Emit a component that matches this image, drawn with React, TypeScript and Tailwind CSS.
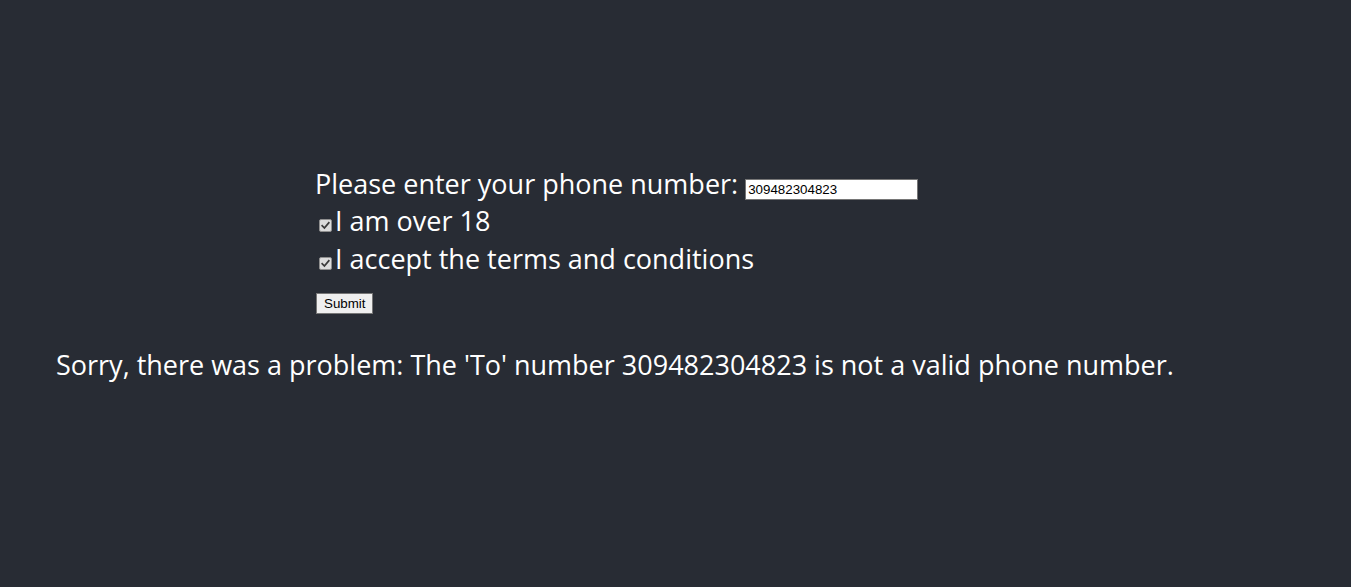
import React from "react";

function Check() {
  return (
    <span className="ml-[4px] mr-[3px] mt-[8px] inline-flex h-[13px] w-[13px] shrink-0 items-center justify-center rounded-[2px] border border-[#8f8f8f] bg-[#dcdcdc]">
      <svg width="9" height="9" viewBox="0 0 9 9" fill="none">
        <path d="M1.2 4.8 L3.4 7 L7.8 1.8" stroke="#3a3a3a" strokeWidth="1.8" strokeLinecap="square" />
      </svg>
    </span>
  );
}

export default function App() {
  return (
    <div
      className="min-h-[587px] w-full bg-[#282c34] text-white"
      style={{ fontFamily: '"Open Sans", "Noto Sans", sans-serif' }}
    >
      <div className="pt-[165px] pl-[315px] text-[27px] leading-[38px]">
        <div className="flex h-[39px] items-baseline">
          <span>Please enter your phone number:&nbsp;</span>
          <input
            readOnly
            value="309482304823"
            className="h-[21px] w-[173px] border border-[#767676] bg-white px-[2px] text-[13.33px] leading-[15px] text-black outline-none"
            style={{ fontFamily: '"Liberation Sans", Arial, sans-serif' }}
          />
        </div>
        <div className="-mt-[2px] flex h-[38px] items-center">
          <Check />
          <span>I am over 18</span>
        </div>
        <div className="flex h-[38px] items-center">
          <Check />
          <span>I accept the terms and conditions</span>
        </div>
        <div className="mt-[15px] flex">
          <button
            className="ml-[1px] h-[21px] border border-[#767676] bg-[#efefef] px-[7px] text-[13.33px] leading-[15px] text-black"
            style={{ fontFamily: '"Liberation Sans", Arial, sans-serif' }}
          >
            Submit
          </button>
        </div>
      </div>
      <div className="mt-[31px] pl-[56px] text-[27px] leading-[39px]">
        Sorry, there was a problem: The 'To' number 309482304823 is not a valid phone number.
      </div>
    </div>
  );
}
